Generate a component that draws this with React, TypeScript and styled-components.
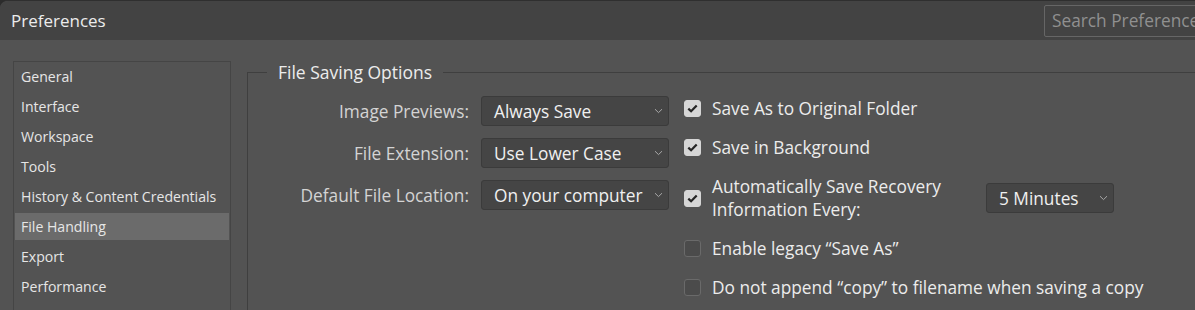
import React from "react";
import styled, { createGlobalStyle } from "styled-components";

const Global = createGlobalStyle`
  html, body { margin: 0; padding: 0; background: #2c2c2c; }
  body { font-family: "Open Sans", "Noto Sans", sans-serif; }
  * { box-sizing: border-box; }
`;

const Window = styled.div`
  width: 1195px;
  height: 310px;
  overflow: hidden;
  background: #535353;
  border-top: 1px solid #2f2f2f;
  border-top-left-radius: 8px;
  display: flex;
  flex-direction: column;
`;

const TitleBar = styled.div`
  height: 39px;
  flex-shrink: 0;
  background: #434343;
  display: flex;
  align-items: center;
  padding-left: 11px;
`;

const Title = styled.div`
  font-size: 17px;
  color: #ececec;
`;

const SearchBox = styled.div`
  margin-left: auto;
  margin-right: -30px;
  width: 181px;
  height: 32px;
  flex-shrink: 0;
  border: 1px solid #666666;
  border-radius: 2px;
  display: flex;
  align-items: center;
  padding-left: 7px;
  font-size: 17.3px;
  color: #909090;
  white-space: nowrap;
  overflow: hidden;
`;

const Body = styled.div`
  flex: 1;
  display: flex;
  align-items: flex-start;
  padding: 21px 0 0 13px;
  gap: 16px;
`;

const Sidebar = styled.ul`
  list-style: none;
  margin: 0;
  padding: 1px 1px;
  width: 218px;
  height: 280px;
  flex-shrink: 0;
  border: 1px solid #454545;
  display: flex;
  flex-direction: column;
  gap: 3px;
`;

const NavItem = styled.li<{ $active?: boolean }>`
  height: 27px;
  display: flex;
  align-items: center;
  padding-left: 6px;
  font-size: 14.1px;
  color: #e6e6e6;
  background: ${(p) => (p.$active ? "#6b6b6b" : "transparent")};
  white-space: nowrap;
`;

const Group = styled.fieldset`
  flex: 1;
  margin: 0;
  padding: 0;
  height: 300px;
  border: 1px solid #3f3f3f;
  border-right: none;
  border-bottom: none;
  min-width: 0;
`;

const Legend = styled.legend`
  margin-left: 19px;
  padding: 0 11px;
  font-size: 17.5px;
  line-height: 22px;
  color: #ececec;
`;

const Columns = styled.div`
  display: flex;
  align-items: flex-start;
  padding-top: 13px;
  gap: 15px;
`;

const FormGrid = styled.div`
  display: grid;
  grid-template-columns: 221px 188px;
  column-gap: 12px;
  row-gap: 12px;
  align-items: center;
`;

const Label = styled.div`
  text-align: right;
  font-size: 17.3px;
  color: #d4d4d4;
  white-space: nowrap;
`;

const SelectBox = styled.div<{ $width?: number }>`
  width: ${(p) => (p.$width ? `${p.$width}px` : "100%")};
  height: 30px;
  flex-shrink: 0;
  background: #454545;
  border: 1px solid #3b3b3b;
  border-radius: 3px;
  display: flex;
  align-items: center;
  justify-content: space-between;
  padding: 0 5px 0 12px;
  font-size: 17.3px;
  color: #f0f0f0;
  white-space: nowrap;
`;

const Chevron = () => (
  <svg width="9" height="6" viewBox="0 0 9 6" fill="none">
    <path d="M1 1.2L4.5 4.6L8 1.2" stroke="#a8a8a8" strokeWidth="1" />
  </svg>
);

const Select = ({ value, width }: { value: string; width?: number }) => (
  <SelectBox $width={width}>
    <span>{value}</span>
    <Chevron />
  </SelectBox>
);

const Options = styled.div`
  display: flex;
  flex-direction: column;
  gap: 16px;
  margin-top: 1px;
`;

const OptionRow = styled.div`
  display: flex;
  align-items: center;
  min-height: 23px;
`;

const Box = styled.span<{ $checked?: boolean }>`
  width: 17px;
  height: 17px;
  flex-shrink: 0;
  border-radius: 3px;
  margin-right: 11px;
  display: flex;
  align-items: center;
  justify-content: center;
  background: ${(p) => (p.$checked ? "#d6d6d6" : "#4b4b4b")};
  border: 1px solid ${(p) => (p.$checked ? "#d6d6d6" : "#6a6a6a")};
`;

const OptionText = styled.span<{ $width?: number }>`
  font-size: 17.3px;
  line-height: 23px;
  color: #ececec;
  white-space: nowrap;
  ${(p) => (p.$width ? `width: ${p.$width}px; flex-shrink: 0;` : "")}
`;

const Check = ({ checked }: { checked?: boolean }) => (
  <Box $checked={checked}>
    {checked && (
      <svg width="11" height="9" viewBox="0 0 11 9" fill="none">
        <path d="M1.3 4.6L4.1 7.3L9.7 1.5" stroke="#262626" strokeWidth="2.2" />
      </svg>
    )}
  </Box>
);

const nav = [
  "General",
  "Interface",
  "Workspace",
  "Tools",
  "History & Content Credentials",
  "File Handling",
  "Export",
  "Performance",
];

export default function App() {
  return (
    <>
      <Global />
      <Window>
        <TitleBar>
          <Title>Preferences</Title>
          <SearchBox>Search Preferences</SearchBox>
        </TitleBar>
        <Body>
          <Sidebar>
            {nav.map((n) => (
              <NavItem key={n} $active={n === "File Handling"}>
                {n}
              </NavItem>
            ))}
          </Sidebar>
          <Group>
            <Legend>File Saving Options</Legend>
            <Columns>
              <FormGrid>
                <Label>Image Previews:</Label>
                <Select value="Always Save" />
                <Label>File Extension:</Label>
                <Select value="Use Lower Case" />
                <Label>Default File Location:</Label>
                <Select value="On your computer" />
              </FormGrid>
              <Options>
                <OptionRow>
                  <Check checked />
                  <OptionText>Save As to Original Folder</OptionText>
                </OptionRow>
                <OptionRow>
                  <Check checked />
                  <OptionText>Save in Background</OptionText>
                </OptionRow>
                <OptionRow>
                  <Check checked />
                  <OptionText $width={274}>
                    Automatically Save Recovery
                    <br />
                    Information Every:
                  </OptionText>
                  <Select value="5 Minutes" width={128} />
                </OptionRow>
                <OptionRow>
                  <Check />
                  <OptionText>Enable legacy “Save As”</OptionText>
                </OptionRow>
                <OptionRow>
                  <Check />
                  <OptionText>Do not append “copy” to filename when saving a copy</OptionText>
                </OptionRow>
              </Options>
            </Columns>
          </Group>
        </Body>
      </Window>
    </>
  );
}
